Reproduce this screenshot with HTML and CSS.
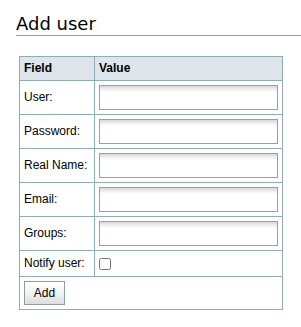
FILE: index.html
```html
<!DOCTYPE html>
<html lang="en">
<head>
    <meta charset="UTF-8">
    <meta name="viewport" content="width=device-width, initial-scale=1.0">
    <title>Add user</title>
    <link rel="stylesheet" href="styles.css">
</head>
<body>
    <h2 class="page-title">Add user</h2>
    <form class="user-form" onsubmit="return false;">
        <table class="form-table">
            <thead>
                <tr>
                    <th class="field-col">Field</th>
                    <th>Value</th>
                </tr>
            </thead>
            <tbody>
                <tr>
                    <td class="label">User:</td>
                    <td><input type="text" class="text-input" name="user"></td>
                </tr>
                <tr>
                    <td class="label">Password:</td>
                    <td><input type="password" class="text-input" name="password"></td>
                </tr>
                <tr>
                    <td class="label">Real Name:</td>
                    <td><input type="text" class="text-input" name="realname"></td>
                </tr>
                <tr>
                    <td class="label">Email:</td>
                    <td><input type="text" class="text-input" name="email"></td>
                </tr>
                <tr>
                    <td class="label">Groups:</td>
                    <td><input type="text" class="text-input" name="groups"></td>
                </tr>
                <tr class="notify-row">
                    <td class="label">Notify user:</td>
                    <td><input type="checkbox" class="check" name="notify"></td>
                </tr>
                <tr>
                    <td colspan="2"><button type="submit" class="add-button">Add</button></td>
                </tr>
            </tbody>
        </table>
    </form>
</body>
</html>
```

FILE: styles.css
```css
:root {
    --border-color: #8eacba;
    --header-bg: #dde5eb;
    --text-color: #000;
}

body {
    margin: 0;
    padding: 13px 0 0 16px;
    font-family: "Liberation Sans", Arial, sans-serif;
    font-size: 12px;
    color: var(--text-color);
    background: #fff;
}

.page-title {
    margin: 0 0 20px 0;
    font-family: "DejaVu Sans", sans-serif;
    font-size: 18px;
    font-weight: normal;
    line-height: 22px;
    padding-bottom: 0;
    border-bottom: 1px solid #8ea3b2;
}

.user-form {
    margin: 0 0 0 3px;
}

.form-table {
    border-collapse: collapse;
    width: 264px;
}

.form-table th,
.form-table td {
    border: 1px solid var(--border-color);
    padding: 4px;
    text-align: left;
    vertical-align: middle;
    line-height: 15px;
}

.form-table th {
    background-color: var(--header-bg);
    font-weight: bold;
}

.field-col {
    width: 66px;
}

.label {
    white-space: nowrap;
}

.text-input {
    display: block;
    box-sizing: border-box;
    width: 179px;
    height: 25px;
    margin: 0;
    padding: 2px 4px;
    border: 1px solid #8ea3b0;
    background: linear-gradient(to bottom, #d8d8d8 0, #f4f4f4 4px, #fff 6px);
    font-family: inherit;
    font-size: 12px;
}

.notify-row td {
    height: 17px;
}

.check {
    display: block;
    width: 12px;
    height: 12px;
    margin: 0;
}

.add-button {
    display: block;
    box-sizing: border-box;
    width: 41px;
    height: 24px;
    margin: 0;
    padding: 0;
    border: 1px solid #8c9ca6;
    background: linear-gradient(to bottom, #fff 0, #f3f3f3 50%, #dcdcdc 100%);
    font-family: inherit;
    font-size: 12px;
    color: var(--text-color);
    cursor: pointer;
}
```
